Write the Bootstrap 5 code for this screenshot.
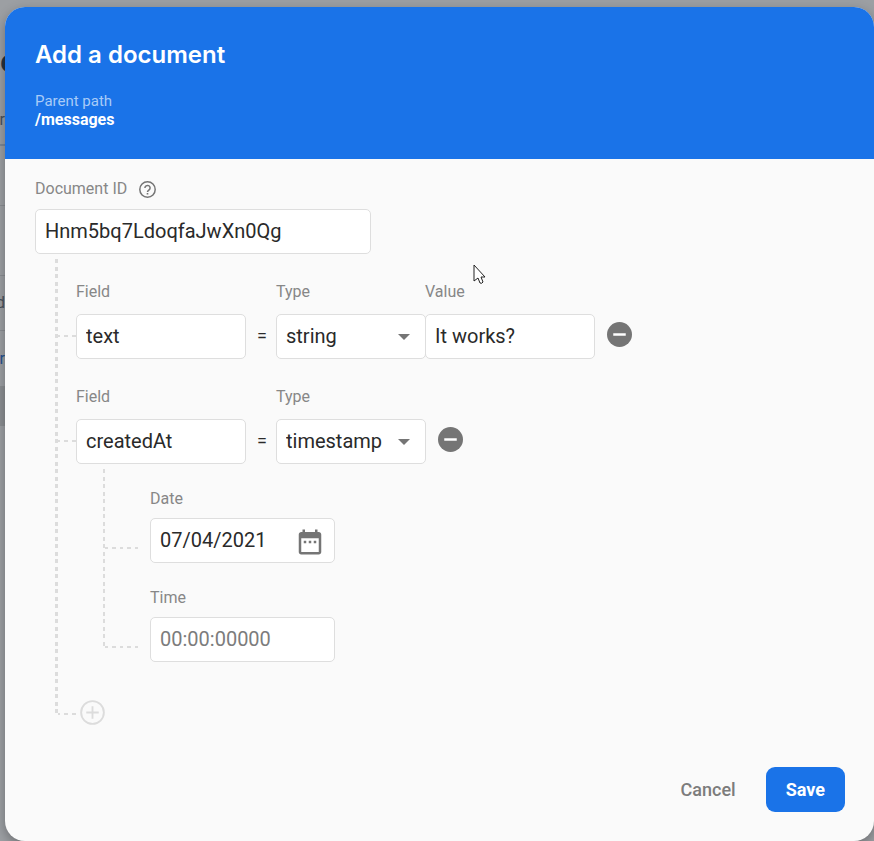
<!DOCTYPE html>
<html lang="en">
<head>
<meta charset="utf-8">
<meta name="viewport" content="width=device-width, initial-scale=1">
<title>Add a document</title>
<link href="https://cdn.jsdelivr.net/npm/bootstrap@5.3.0/dist/css/bootstrap.min.css" rel="stylesheet">
<script src="https://cdn.jsdelivr.net/npm/bootstrap@5.3.0/dist/js/bootstrap.bundle.min.js" defer></script>
<style>
body{font-family:Roboto,"Liberation Sans",sans-serif;background:#9c9fa3;color:#2a2a2a;line-height:24px}
.page-strip{width:5px;color:#4a525b}
.strip-item{display:flex;justify-content:flex-end;overflow:hidden;border-bottom:1px solid #8a8d92;font-size:16px}
.strip-a{height:146px;flex-direction:column;justify-content:flex-start;align-items:flex-end;border-bottom:2px solid #7d8896}
.strip-a b{align-self:flex-start;font-size:32px;line-height:40px;color:#26323e;margin-top:41px;font-weight:500}
.strip-a span{margin-top:27px}
.strip-gap{height:60px}
.strip-gap2{height:70px}
.strip-b{height:55px;align-items:center}
.strip-c{height:55px;align-items:center;border:0;color:#25508f}
.strip-d{height:40px;background:#8b8e92}
.dialog-box{border-radius:20px;background:#fafafa;box-shadow:0 4px 12px rgba(0,0,0,.3);overflow:hidden;margin-top:7px}
.dialog-head{background:#1a73e8;padding:32px 30px 30px}
.dialog-head h1{font:600 24px/32px "Inter",sans-serif;margin-bottom:20px}
.path-label{font-size:15px;line-height:19px;color:#a9cbf7;padding-top:1px}
.path-value{font-size:16px;line-height:18px;font-weight:700}
.dialog-main{padding:18px 30px 0}
.field-label{display:block;font-size:16px;line-height:24px;color:#878787;margin-bottom:10px}
.id-row{gap:12px;margin-bottom:8px}
.id-row .field-label{margin:0}
.sub .field-label{margin-bottom:7px}
.form-control.box,.form-select.box{height:45px;border:1px solid #dedede;border-radius:5px;padding:0 9px 2px;font-size:20px;color:#2a2a2a;background-color:#fff}
.form-control.box::placeholder{color:#7c7c7c;opacity:1}
.form-select.box{background-image:url("data:image/svg+xml,%3Csvg xmlns='http://www.w3.org/2000/svg' viewBox='0 0 12 6'%3E%3Cpath fill='%23757575' d='M0 0h12L6 6z'/%3E%3C/svg%3E");background-size:12px 6px;background-position:right 15px center}
.w-id{width:336px}.w-text{width:170px}.w-type{width:150px}.w-time{width:185px}
.tree{margin:5px 0 0 20px}
.trunk{width:3px;margin-bottom:11px;background:repeating-linear-gradient(#dcdcdc 0 4px,transparent 4px 8px,#dcdcdc 8px 12px,transparent 12px 15px)}
.sub .trunk{width:2px;margin-bottom:14px}
.twig{width:18px;height:2px;align-self:flex-end;margin-bottom:22px;background:linear-gradient(90deg,#dcdcdc 0 2px,transparent 2px 6px,#dcdcdc 6px 10px,transparent 10px 14px,#dcdcdc 14px 18px)}
.sub .twig{width:33px;margin:0 12px 14px 0;background:repeating-linear-gradient(90deg,#dcdcdc 0 3px,transparent 3px 7px,#dcdcdc 7px 11px,transparent 11px 15px)}
.branches{padding-top:21px}
.branch + .branch{margin-top:26px}
.equals{width:30px;line-height:43px;padding:0 0 2px 2px;font-size:18px;text-align:center}
.value-col{margin-left:-1px}
.sub{margin:5px 0 0 45px}
.sub-row{padding-top:18px}
.sub-row + .sub-row{padding-top:23px}
.icon-btn{border:0;background:none;padding:0;line-height:0;color:#757575}
.remove{margin:0 0 12px 12px}
.add-row{margin-top:38px}
.add-row .twig{margin:0 4px 10px 0}
.add-row .icon-btn{color:#dcdcdc}
.date-box .form-control{padding-right:44px}
.date-btn{position:absolute;right:10px;top:9px}
.dialog-foot{padding:42px 29px 29px}
.dialog-foot .btn{height:45px;font-size:18px;font-weight:500;padding:0 20px;border-radius:9px;border:0}
.btn-quiet{color:#7c7c7c}
.btn-save{background:#1a73e8;color:#fff}
.dialog-foot .btn-save{font-weight:700;margin-left:10px}
.cursor{position:absolute;left:473px;top:264px}
</style>
</head>
<body class="min-vh-100 position-relative">
<div class="d-flex">
<div class="page-strip flex-shrink-0" aria-hidden="true">
<div class="strip-item strip-a"><b>e</b><span>r</span></div>
<div class="strip-item strip-gap"></div>
<div class="strip-item strip-gap2"></div>
<div class="strip-item strip-b">d</div>
<div class="strip-item strip-c">r</div>
<div class="strip-d"></div>
</div>
<form class="dialog-box flex-grow-1" role="dialog" aria-labelledby="dlg-title">
<header class="dialog-head text-white">
<h1 id="dlg-title">Add a document</h1>
<div class="path-label">Parent path</div>
<div class="path-value">/messages</div>
</header>
<div class="dialog-main">
<div class="id-row d-flex align-items-center">
<label class="field-label" for="doc-id">Document ID</label>
<button type="button" class="icon-btn" aria-label="Help"><svg width="17" height="17" viewBox="0 0 17 17" fill="none" stroke="currentColor" stroke-width="1.5"><circle cx="8.5" cy="8.5" r="7.7"/><path d="M5.900 7a2.600 2.500 0 1 1 4.200 1.900C9.200 9.600 8.500 10 8.500 11"/><path d="M8.500 11.900v1.500" stroke-width="1.600"/></svg></button>
</div>
<input id="doc-id" class="form-control box w-id" type="text" value="Hnm5bq7LdoqfaJwXn0Qg">
<div class="tree d-flex">
<div class="trunk flex-shrink-0"></div>
<div class="branches flex-grow-1">
<div class="branch d-flex align-items-end">
<div class="twig"></div>
<div><label class="field-label" for="f1">Field</label><input id="f1" class="form-control box w-text" type="text" value="text"></div>
<div class="equals">=</div>
<div><label class="field-label" for="t1">Type</label><select id="t1" class="form-select box w-type"><option>string</option><option>timestamp</option></select></div>
<div class="value-col"><label class="field-label" for="v1">Value</label><input id="v1" class="form-control box w-text" type="text" value="It works?"></div>
<button type="button" class="icon-btn remove" aria-label="Remove field"><svg width="25" height="25" viewBox="0 0 20 20"><circle cx="10" cy="10" r="10" fill="currentColor"/><path d="M5 9h10v2H5z" fill="#fff"/></svg></button>
</div>
<div class="branch d-flex align-items-end">
<div class="twig"></div>
<div><label class="field-label" for="f2">Field</label><input id="f2" class="form-control box w-text" type="text" value="createdAt"></div>
<div class="equals">=</div>
<div><label class="field-label" for="t2">Type</label><select id="t2" class="form-select box w-type"><option>timestamp</option><option>string</option></select></div>
<button type="button" class="icon-btn remove" aria-label="Remove field"><svg width="25" height="25" viewBox="0 0 20 20"><circle cx="10" cy="10" r="10" fill="currentColor"/><path d="M5 9h10v2H5z" fill="#fff"/></svg></button>
</div>
<div class="sub d-flex">
<div class="trunk flex-shrink-0"></div>
<div>
<div class="sub-row d-flex align-items-end">
<div class="twig"></div>
<div><label class="field-label" for="date">Date</label>
<div class="date-box position-relative"><input id="date" class="form-control box w-time" type="text" value="07/04/2021"><button type="button" class="icon-btn date-btn" aria-label="Pick a date"><svg width="30" height="30" viewBox="0 0 24 24" fill="currentColor"><path d="M9 11H7v2h2v-2zm4 0h-2v2h2v-2zm4 0h-2v2h2v-2zm2-7h-1V2h-2v2H8V2H6v2H5c-1.110 0-2 .9-2 2v14c0 1.100.89 2 2 2h14c1.100 0 2-.9 2-2V6c0-1.100-.9-2-2-2zm0 16H5V9h14v11z"/></svg></button></div></div>
</div>
<div class="sub-row d-flex align-items-end">
<div class="twig"></div>
<div><label class="field-label" for="time">Time</label><input id="time" class="form-control box w-time" type="text" placeholder="00:00:00000"></div>
</div>
</div>
</div>
<div class="add-row d-flex">
<div class="twig"></div>
<button type="button" class="icon-btn" aria-label="Add field"><svg width="25" height="25" viewBox="0 0 20 20" fill="none" stroke="currentColor" stroke-width="1.5"><circle cx="10" cy="10" r="9.100"/><path d="M10 5v10M5 10h10"/></svg></button>
</div>
</div>
</div>
</div>
<footer class="dialog-foot d-flex justify-content-end">
<button type="button" class="btn btn-quiet">Cancel</button>
<button type="submit" class="btn btn-save">Save</button>
</footer>
</form>
</div>
<svg class="cursor" width="14" height="21" viewBox="0 0 14 21" aria-hidden="true"><path d="M1 1v16l4-3 2 5q2 1 3-1l-2-5h4z" fill="#fff" stroke="#222" stroke-width="1"/></svg>
</body>
</html>
